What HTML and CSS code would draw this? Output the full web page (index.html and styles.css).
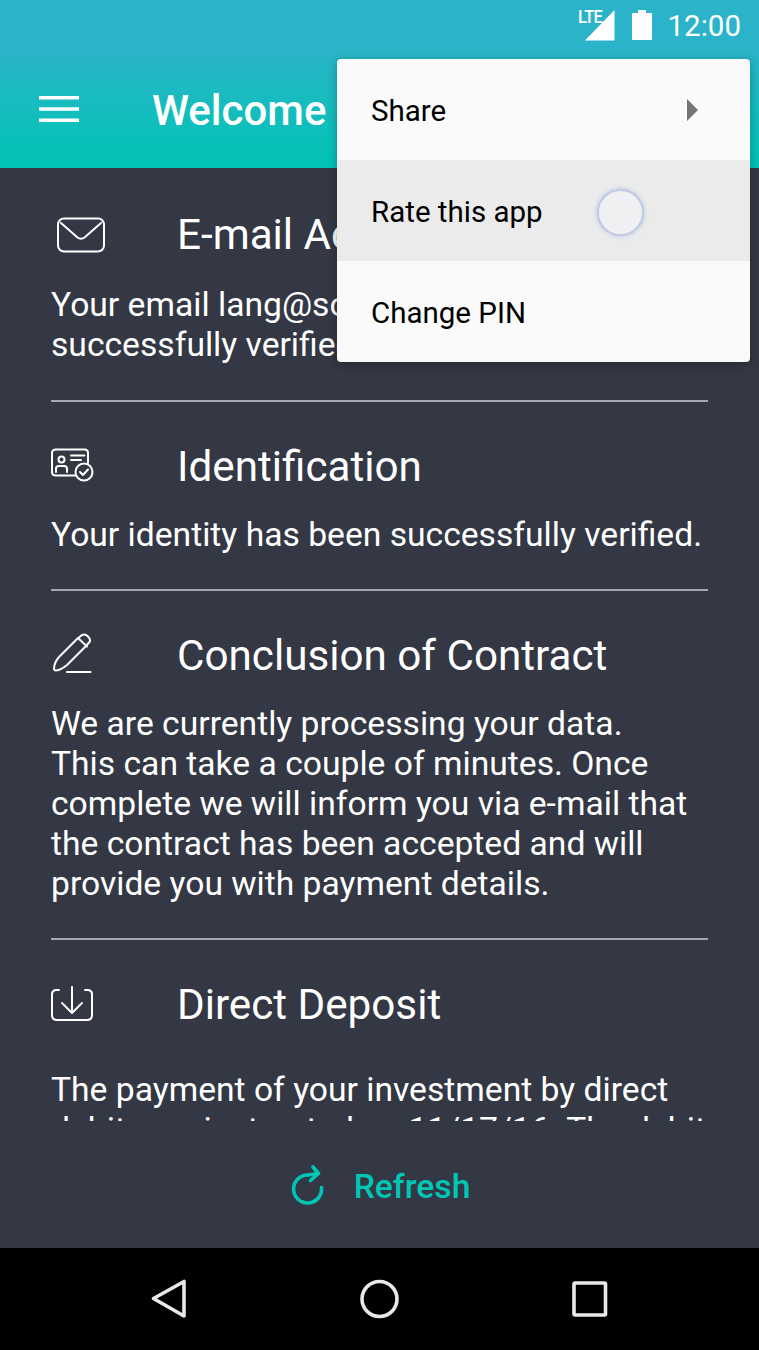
FILE: index.html
```html
<!DOCTYPE html>
<html lang="en">
<head>
<meta charset="utf-8">
<title>Welcome</title>
<link rel="stylesheet" href="styles.css">
</head>
<body>
<div class="screen">
  <header class="app-header">
    <div class="status-bar">
      <div class="signal">
        <span class="lte">LTE</span>
        <svg class="signal-icon" width="30" height="32" viewBox="0 0 30 32"><path d="M29.5 1V31.5H0Z" fill="#fff"/></svg>
      </div>
      <svg class="battery" width="20" height="31" viewBox="0 0 20 31"><path d="M6 1H14V4H19Q20 4 20 5V30Q20 31 19 31H1Q0 31 0 30V5Q0 4 1 4H6Z" fill="#fff"/></svg>
      <span class="clock">12:00</span>
    </div>
    <div class="toolbar">
      <svg class="menu-icon" width="40" height="26" viewBox="0 0 40 26"><path d="M0 0H40V3.4H0ZM0 11.3H40V14.7H0ZM0 22.6H40V26H0Z" fill="#fff"/></svg>
      <h1 class="toolbar-title">Welcome</h1>
    </div>
  </header>

  <main class="scroll">
    <section class="step step-first">
      <div class="step-head">
        <span class="step-icon">
          <svg width="50" height="36" viewBox="0 0 50 36" fill="none" stroke="#fff" stroke-width="2" stroke-linecap="round" stroke-linejoin="round"><rect x="2" y="1.500" width="46" height="33" rx="6"/><path d="M5 6L21.500 20.500Q25 23 28.500 20.500L45 6"/></svg>
        </span>
        <h2 class="step-title">E-mail Address</h2>
      </div>
      <p class="step-text">Your email lang@solaris.de has been<br>successfully verified.</p>
    </section>

    <section class="step">
      <div class="step-head">
        <span class="step-icon step-icon-id">
          <svg width="44" height="34" viewBox="0 0 44 34" fill="none" stroke="#fff" stroke-width="2" stroke-linecap="round" stroke-linejoin="round"><path d="M26 27.500H5Q1 27.500 1 24V5Q1 1.500 5 1.500H33.500Q37 1.500 37 5V15"/><circle cx="10.500" cy="11.500" r="3"/><path d="M5 24V20.500Q5 18 8 18H13Q16 18 16 20.500V24"/><path d="M20 7.500H33.500M20 12H30"/><circle cx="33" cy="24" r="8.500" fill="#333844"/><path d="M29 24L32 27L37 21.500"/></svg>
        </span>
        <h2 class="step-title">Identification</h2>
      </div>
      <p class="step-text">Your identity has been successfully verified.</p>
    </section>

    <section class="step">
      <div class="step-head">
        <span class="step-icon step-icon-pen">
          <svg width="44" height="42" viewBox="0 0 44 42" fill="none" stroke="#fff" stroke-width="2" stroke-linecap="round" stroke-linejoin="round"><path d="M3 35.500Q3 30 8 24L26 6L31 2Q34 0.500 37 3.500Q40 6.500 38.500 9L34 14L16 32Q10 37 5 37.500Q3 37.500 3 35.500Z"/><path d="M27 5L36 13.500"/><path d="M16 39H39.500"/></svg>
        </span>
        <h2 class="step-title">Conclusion of Contract</h2>
      </div>
      <p class="step-text">We are currently processing your data.<br>This can take a couple of minutes. Once<br>complete we will inform you via e-mail that<br>the contract has been accepted and will<br>provide you with payment details.</p>
    </section>

    <section class="step step-last">
      <div class="step-head">
        <span class="step-icon step-icon-down">
          <svg width="44" height="38" viewBox="0 0 44 38" fill="none" stroke="#fff" stroke-width="2" stroke-linecap="round" stroke-linejoin="round"><path d="M8 5H5.500Q1 5 1 9.500V30Q1 35 6 35H36Q41 35 41 30V9.500Q41 5 36.500 5H34"/><path d="M21 2V28M11 18L21 28L31 18"/></svg>
        </span>
        <h2 class="step-title">Direct Deposit</h2>
      </div>
      <p class="step-text">The payment of your investment by direct<br>debit was instructed on 11/17/16. The debit</p>
    </section>
  </main>

  <div class="refresh-bar">
    <svg class="refresh-icon" width="34" height="42" viewBox="0 0 34 42" fill="none" stroke="#00c6b6" stroke-width="3.600" stroke-linecap="round" stroke-linejoin="round"><path d="M26 8.700L17 10A14 14 0 1 0 30.500 22.500"/><path d="M22 2L27.500 8.500L19.500 15.500"/></svg>
    <span class="refresh-label">Refresh</span>
  </div>

  <nav class="nav-bar">
    <svg width="36" height="40" viewBox="0 0 36 40" fill="none" stroke="#e8e8e8" stroke-width="3.600" stroke-linejoin="round"><path d="M33 2.500V37L2.500 19.500Z"/></svg>
    <svg width="40" height="40" viewBox="0 0 40 40" fill="none" stroke="#e8e8e8" stroke-width="3.600"><circle cx="19.500" cy="20" r="17.500"/></svg>
    <svg width="36" height="36" viewBox="0 0 36 36" fill="none" stroke="#e8e8e8" stroke-width="3.600" stroke-linejoin="round"><rect x="2" y="2" width="31.500" height="32" rx="1"/></svg>
  </nav>

  <div class="popup">
    <div class="popup-item">
      <span>Share</span>
      <svg class="popup-arrow" width="11" height="22" viewBox="0 0 11 22"><path d="M0 0L11 11L0 22Z" fill="#757575"/></svg>
    </div>
    <div class="popup-item popup-item-active">
      <span>Rate this app</span>
      <span class="touch-dot"></span>
    </div>
    <div class="popup-item"><span>Change PIN</span></div>
  </div>
</div>
</body>
</html>
```

FILE: styles.css
```css
* {
  box-sizing: border-box;
}

html,
body {
  margin: 0;
  padding: 0;
}

body {
  font-family: Roboto, "Liberation Sans", sans-serif;
  background: #333844;
}

.screen {
  position: relative;
  width: 759px;
  height: 1350px;
  display: flex;
  flex-direction: column;
  overflow: hidden;
  background: #333844;
  color: #fff;
}

.app-header {
  flex: none;
  height: 168px;
  display: flex;
  flex-direction: column;
}

.status-bar {
  flex: none;
  height: 50px;
  padding: 9px 18px 0 0;
  display: flex;
  justify-content: flex-end;
  align-items: flex-start;
  background: #2bb4c9;
}

.signal {
  position: relative;
  width: 36px;
  height: 32px;
  margin-right: 17px;
  display: flex;
  justify-content: flex-end;
}

.lte {
  position: absolute;
  left: -1px;
  top: -1px;
  font-size: 18px;
  line-height: 18px;
  font-weight: 500;
  letter-spacing: -0.8px;
  transform: scaleX(0.92);
  transform-origin: left top;
}

.battery {
  margin-right: 16px;
}

.clock {
  font-size: 29.500px;
  line-height: 34px;
}

.toolbar {
  flex: 1;
  display: flex;
  align-items: center;
  padding: 0 0 0 39px;
  background: linear-gradient(#2ab5c8, #00c4b4);
}

.toolbar-title {
  margin: 0 0 0 73px;
  padding-top: 4px;
  font-size: 42px;
  line-height: 48px;
  font-weight: 500;
}

.scroll {
  flex: none;
  height: 953px;
  padding: 0 51px;
  overflow: hidden;
}

.step {
  padding: 35px 0 34px;
  border-bottom: 2px solid #a5a8ae;
}

.step-first {
  padding: 37px 0 35px;
}

.step-last {
  border-bottom: 0;
}

.step-head {
  display: flex;
  align-items: center;
  height: 60px;
  margin-bottom: 18px;
}

.step-first .step-head {
  margin-bottom: 20px;
}

.step-last .step-head {
  margin-bottom: 35px;
}

.step-icon {
  flex: none;
  width: 126px;
  display: flex;
}

.step-first .step-icon {
  padding-left: 5px;
}

.step-icon-id {
  margin-bottom: 4px;
}

.step-icon-pen {
  margin-bottom: 4px;
}

.step-icon-down {
  margin-bottom: 2px;
}

.step-title {
  margin: 0;
  font-size: 42.200px;
  line-height: 60px;
  font-weight: 400;
  white-space: nowrap;
}

.step-text {
  margin: 0;
  font-size: 33.650px;
  line-height: 40px;
  white-space: nowrap;
}

.refresh-bar {
  flex: none;
  height: 127px;
  display: flex;
  align-items: center;
  justify-content: center;
  gap: 29px;
  padding-left: 2px;
}

.refresh-icon {
  margin-top: 3px;
}

.refresh-label {
  padding-top: 4px;
  font-size: 33.650px;
  line-height: 40px;
  font-weight: 500;
  color: #00c6b6;
}

.nav-bar {
  flex: none;
  height: 102px;
  display: flex;
  align-items: center;
  justify-content: space-between;
  padding: 0 151px;
  background: #000;
}

.popup {
  position: absolute;
  left: 337px;
  top: 59px;
  width: 413px;
  display: flex;
  flex-direction: column;
  border-radius: 4px;
  background: #fafafa;
  overflow: hidden;
  box-shadow: 0 2px 10px rgba(0, 0, 0, 0.3);
  color: #000;
}

.popup-item {
  position: relative;
  height: 101px;
  padding: 2px 52px 0 34px;
  display: flex;
  align-items: center;
  justify-content: space-between;
  font-size: 29.500px;
}

.popup-arrow {
  margin-top: -2px;
}

.popup-item-active {
  background: #ebebeb;
}

.touch-dot {
  position: absolute;
  left: 260px;
  top: 29px;
  width: 47px;
  height: 47px;
  border-radius: 50%;
  background: #f0f0f2;
  border: 2px solid #c2c9e6;
  box-shadow: 0 0 4px rgba(170, 180, 225, 0.8);
}
```
